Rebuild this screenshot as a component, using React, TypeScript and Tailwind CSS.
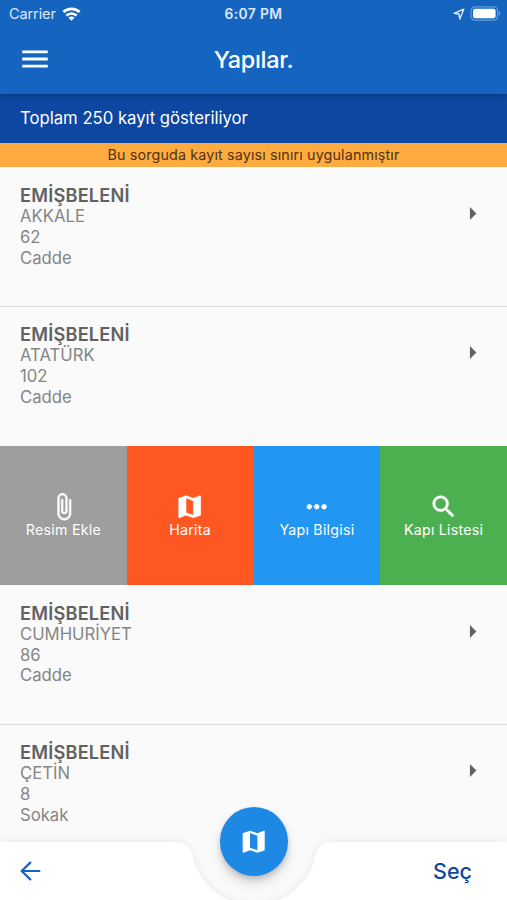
import React from 'react';
import {
  MdArrowRight,
  MdAttachFile,
  MdMap,
  MdMenu,
  MdMoreHoriz,
  MdSearch,
} from 'react-icons/md';

interface Building {
  district: string;
  street: string;
  no: string;
  type: string;
}

const firstBuildings: Building[] = [
  { district: 'EMİŞBELENİ', street: 'AKKALE', no: '62', type: 'Cadde' },
  { district: 'EMİŞBELENİ', street: 'ATATÜRK', no: '102', type: 'Cadde' },
];

const lastBuildings: Building[] = [
  { district: 'EMİŞBELENİ', street: 'CUMHURİYET', no: '86', type: 'Cadde' },
  { district: 'EMİŞBELENİ', street: 'ÇETİN', no: '8', type: 'Sokak' },
];

const actions = [
  { label: 'Resim Ekle', icon: MdAttachFile, color: 'bg-[#9e9e9e]' },
  { label: 'Harita', icon: MdMap, color: 'bg-[#ff5722]' },
  { label: 'Yapı Bilgisi', icon: MdMoreHoriz, color: 'bg-[#2196f3]' },
  { label: 'Kapı Listesi', icon: MdSearch, color: 'bg-[#4caf50]' },
];

function StatusBar() {
  return (
    <div className="grid grid-cols-3 items-center h-[27px] pl-[9px] pr-[6px] text-[14.5px] text-white/85">
      <div className="flex items-center gap-[6px]">
        <span className="tracking-[-0.1px]">Carrier</span>
        <svg width="19" height="14" viewBox="0 0 19 14" fill="none">
          <path d="M1.4 5.1a11.6 11.6 0 0 1 16.2 0" stroke="white" strokeWidth="2.8" />
          <path d="M4.4 8.6a7.2 7.2 0 0 1 10.2 0" stroke="white" strokeWidth="2.6" />
          <path d="M9.5 13.8 6.5 10.8a4.2 4.2 0 0 1 6 0z" fill="white" />
        </svg>
      </div>
      <span className="text-center font-semibold text-[13.8px] tracking-[0.4px] pr-[3px] pt-[1px]">6:07 PM</span>
      <div className="flex items-center justify-end gap-[5px]">
        <svg width="12" height="12" viewBox="0 0 12 12" fill="none">
          <path d="M10.8 1.2 1 5.3l5 .7.8 5z" stroke="white" strokeOpacity=".9" strokeWidth="1.3" strokeLinejoin="round" />
        </svg>
        <svg width="31" height="15" viewBox="0 0 31 15" fill="none">
          <rect x="1" y=".8" width="26.6" height="13.4" rx="4" stroke="white" strokeOpacity=".35" strokeWidth="1.2" />
          <rect x="3" y="2.8" width="22.6" height="9.4" rx="2.3" fill="white" />
          <path d="M29 5.3c1.6.6 1.6 3.8 0 4.4z" fill="white" fillOpacity=".45" />
        </svg>
      </div>
    </div>
  );
}

function BuildingRow({ building }: { building: Building }) {
  return (
    <div className="flex justify-between h-[139.25px] px-[20px] pt-[17px] border-t border-[#dcdcdc] first:border-transparent">
      <div className="text-[16.7px] leading-[20.9px] text-[#858585]">
        <h2 className="font-semibold text-[18.2px] tracking-[0.2px] text-[#616161]">{building.district}</h2>
        <p>{building.street}</p>
        <p>{building.no}</p>
        <p>{building.type}</p>
      </div>
      <MdArrowRight className="size-[31px] mt-[13px] -mr-px text-[#616161]" />
    </div>
  );
}

export default function App() {
  return (
    <div className="relative flex flex-col w-[507px] h-[900px] overflow-hidden bg-[#fafafa] font-['Inter','Noto_Sans',sans-serif]">
      <header className="relative z-10 h-[94px] shrink-0 bg-[#1565c0] text-white shadow-[0_1px_5px_rgba(0,0,0,0.25)]">
        <StatusBar />
        <div className="grid grid-cols-[1fr_auto_1fr] items-center h-[64px] px-[18px]">
          <button>
            <MdMenu className="size-[34px]" />
          </button>
          <h1 className="text-[23.4px] font-medium tracking-[-0.3px] pt-[2px]">Yapılar.</h1>
        </div>
      </header>

      <div className="flex items-center h-[48.5px] shrink-0 px-[20px] pt-px bg-[#0d47a1] text-[16.7px] text-white">
        Toplam 250 kayıt gösteriliyor
      </div>
      <div className="flex items-center justify-center h-[24.5px] shrink-0 bg-[#ffab40] text-[14.3px] tracking-[0.15px] text-[#4d3413]">
        Bu sorguda kayıt sayısı sınırı uygulanmıştır
      </div>

      <main className="flex flex-col flex-1 min-h-0 overflow-hidden">
        <div className="shrink-0">
          {firstBuildings.map((building) => (
            <BuildingRow key={building.street} building={building} />
          ))}
        </div>
        {/* Swipe actions of the opened row */}
        <div className="grid grid-cols-4 h-[139.25px] shrink-0">
          {actions.map(({ label, icon: Icon, color }) => (
            <button
              key={label}
              className={`flex flex-col items-center justify-center text-white ${color}`}
            >
              <Icon className="size-[29.4px] stroke-[0.4] [&>path[fill=none]]:stroke-none" />
              <span className="text-[14.2px] leading-[17px] tracking-[0.25px]">{label}</span>
            </button>
          ))}
        </div>
        <div className="shrink-0">
          {lastBuildings.map((building) => (
            <BuildingRow key={building.street} building={building} />
          ))}
        </div>
      </main>

      {/* Bottom bar, notched around the floating map button */}
      <footer className="absolute inset-x-0 bottom-0 h-[58px]">
        <svg
          className="absolute inset-0 overflow-visible drop-shadow-[0_0_4px_rgba(0,0,0,0.08)]"
          width="507"
          height="58"
          viewBox="0 0 507 58"
        >
          <path
            d="M0 0H171.4Q189.8 0 192.2 12.2A63 63 0 0 0 315.8 12.2Q318.2 0 336.6 0H507V90H0Z"
            fill="white"
          />
        </svg>
        <div className="relative flex items-center justify-between h-full pl-[20px] pr-[35px]">
          <button>
            <svg width="22" height="20" viewBox="0 0 22 20" fill="none" stroke="#1565c0" strokeWidth="2.2" strokeLinecap="round" strokeLinejoin="round">
              <path d="M10.3 1.6 1.6 10l8.7 8.4M1.6 10h17.8" />
            </svg>
          </button>
          <button className="text-[21.5px] font-medium text-[#0d47a1]">Seç</button>
        </div>
        <button className="absolute left-[219.5px] top-[-35px] flex items-center justify-center size-[68.6px] rounded-full bg-[#1e88e5] text-white shadow-[0_7px_12px_rgba(0,0,0,0.14),0_3px_5px_rgba(0,0,0,0.14)]">
          <MdMap className="size-[29.4px]" />
        </button>
      </footer>
    </div>
  );
}
